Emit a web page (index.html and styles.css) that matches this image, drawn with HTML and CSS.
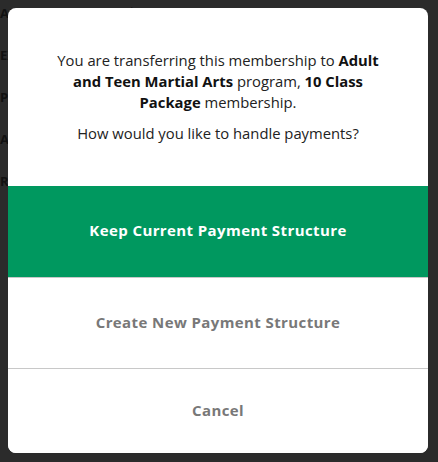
FILE: index.html
```html
<!DOCTYPE html>
<html>
<head>
<meta charset="utf-8">
<link rel="stylesheet" href="styles.css">
</head>
<body>
<div class="page">
  <div class="amount">$10.00</div>
  <div class="labels">
    <div class="label">ALL</div>
    <div class="label">EXP</div>
    <div class="label">PAY</div>
    <div class="label">AMT</div>
    <div class="label">RE</div>
  </div>
</div>
<div class="overlay">
  <div class="modal">
    <div class="content">
      <p class="msg">You are transferring this membership to <b>Adult and Teen Martial Arts</b> program, <b>10 Class Package</b> membership.</p>
      <p class="question">How would you like to handle payments?</p>
    </div>
    <div class="actions">
      <button class="btn btn-primary">Keep Current Payment Structure</button>
      <button class="btn btn-secondary">Create New Payment Structure</button>
      <button class="btn btn-cancel">Cancel</button>
    </div>
  </div>
</div>
</body>
</html>
```
FILE: styles.css
```css
* { box-sizing: border-box; }
html, body { margin: 0; padding: 0; }
body {
  width: 438px;
  height: 462px;
  background: #2b2b2b;
  font-family: "Open Sans", "Liberation Sans", sans-serif;
  overflow: hidden;
  position: relative;
}
.page {
  height: 462px;
  position: relative;
}
.amount {
  position: absolute;
  left: 128px;
  top: 3px;
  font-size: 13px;
  font-weight: 700;
  color: #111;
}
.labels {
  display: flex;
  flex-direction: column;
  gap: 24px;
  padding-top: 4px;
}
.label {
  font-size: 13px;
  font-weight: 700;
  color: #111;
  line-height: 18px;
  margin-left: 0;
}
.overlay {
  position: absolute;
  inset: 0;
  padding: 8px 10px 9px 8px;
}
.modal {
  width: 420px;
  height: 445px;
  background: #fff;
  border-radius: 8px;
  overflow: hidden;
  display: flex;
  flex-direction: column;
}
.content {
  padding: 42px 40px 0;
  text-align: center;
  color: #222;
  font-size: 14.8px;
  line-height: 21px;
}
.content p { margin: 0; }
.content b { font-weight: 700; color: #111; }
.question { margin-top: 10px !important; }
.actions {
  margin-top: 42px;
  display: flex;
  flex-direction: column;
  flex: 1;
}
.btn {
  border: 0;
  margin: 0;
  width: 100%;
  font-family: "Open Sans", "Liberation Sans", sans-serif;
  font-size: 15px;
  font-weight: 700;
  letter-spacing: 0.4px;
  background: #fff;
  cursor: pointer;
  padding: 0 0 2px;
}
.btn-primary {
  height: 92px;
  background: #00985f;
  color: #fff;
  border-bottom: 1px solid #c8c8c8;
  padding-bottom: 3px;
}
.btn-secondary {
  height: 91px;
  color: #787878;
  border-bottom: 1px solid #c8c8c8;
}
.btn-cancel {
  flex: 1;
  color: #787878;
}
```
